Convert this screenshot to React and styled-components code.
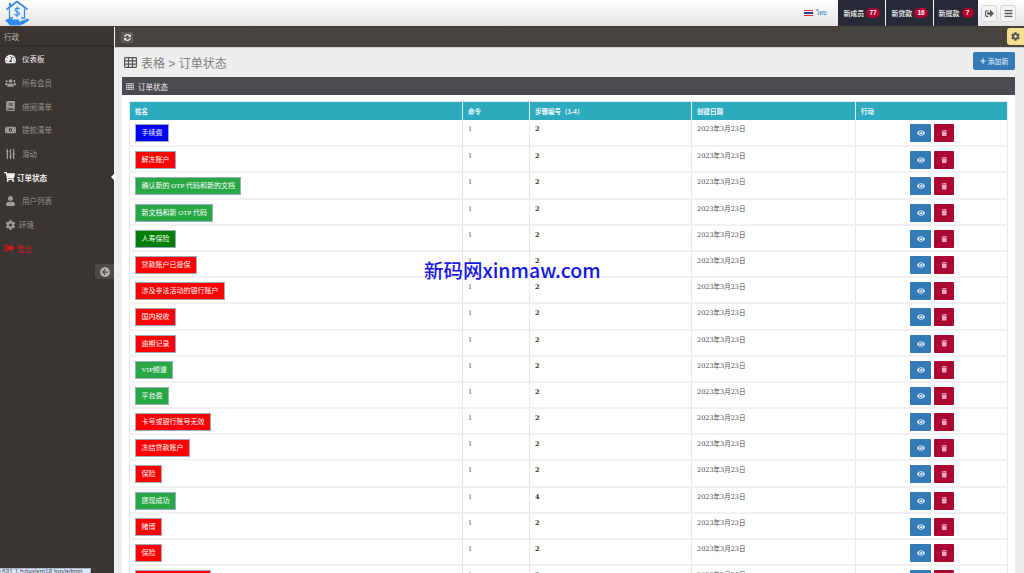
import styled, { createGlobalStyle } from "styled-components";
import {
  FaArrowCircleLeft,
  FaBars,
  FaBook,
  FaCog,
  FaEye,
  FaMoneyBillAlt,
  FaPlus,
  FaShoppingCart,
  FaSignOutAlt,
  FaSlidersH,
  FaSyncAlt,
  FaTachometerAlt,
  FaTrash,
  FaUser,
  FaUsers,
} from "react-icons/fa";

const GlobalStyle = createGlobalStyle`
  html, body {
    margin: 0;
    height: 100%;
    overflow: hidden;
    background: #eeeeee;
    font-family: "Liberation Sans", "Noto Sans CJK SC", sans-serif;
  }
`;

const Page = styled.div`
  position: relative;
  width: 1024px;
  height: 573px;
  overflow: hidden;
  display: flex;
  flex-direction: column;
`;

const TopBar = styled.header`
  flex: none;
  height: 26px;
  display: flex;
  align-items: stretch;
  background: linear-gradient(#ffffff, #e4e4e4);
  border-bottom: 1px solid #3f3b38;
`;

const Logo = styled.div`
  width: 34px;
  padding-left: 5px;
`;

const Lang = styled.div`
  margin-left: auto;
  margin-right: 10px;
  display: flex;
  align-items: center;
  gap: 3px;
  font-size: 6.5px;
  color: #337ab7;
`;

const Flag = styled.span`
  width: 9px;
  height: 6px;
  background: linear-gradient(
    #d8344a 0 18%,
    #f4f4f4 18% 34%,
    #2d3a78 34% 66%,
    #f4f4f4 66% 82%,
    #d8344a 82%
  );
`;

const Stat = styled.div`
  width: ${(p) => p.$width}px;
  margin-left: 1px;
  display: flex;
  align-items: center;
  justify-content: center;
  gap: 2px;
  background: #272a36;
  color: #dddddd;
  font-size: 7px;
  font-weight: 700;
`;

const Badge = styled.span`
  min-width: 6px;
  padding: 0 3px;
  height: 10px;
  line-height: 10px;
  text-align: center;
  border-radius: 5px;
  background: #b0002f;
  color: #fff;
  font-size: 6.5px;
`;

const TopButtons = styled.div`
  display: flex;
  align-items: center;
  gap: 3px;
  padding: 0 8px 0 3px;
`;

const TopButton = styled.div`
  box-sizing: border-box;
  width: 16px;
  height: 17px;
  display: flex;
  align-items: center;
  justify-content: center;
  border: 1px solid #d8d8d8;
  border-radius: 2px;
  background: #f4f4f4;
  color: #555;
  font-size: 9px;
`;

const Body = styled.div`
  flex: 1;
  min-height: 0;
  display: flex;
`;

const Sidebar = styled.nav`
  position: relative;
  flex: none;
  width: 114px;
  background: #3a3532;
`;

const SideTitle = styled.div`
  height: 18px;
  line-height: 22px;
  padding-left: 4px;
  font-size: 7.5px;
  color: #b8b4b0;
  border-bottom: 2px solid #322e2b;
`;

const SideList = styled.ul`
  list-style: none;
  margin: 0;
  padding: 0;
`;

const SideItem = styled.li`
  height: 23.7px;
  display: flex;
  align-items: center;
  gap: ${(p) => (p.$active || p.$logout ? "2px" : p.$short ? "3px" : "6px")};
  padding-left: ${(p) => (p.$active || p.$logout ? "4px" : "5px")};
  font-size: 7.5px;
  font-weight: ${(p) => (p.$active ? 700 : 400)};
  color: ${(p) =>
    p.$logout ? "#d81818" : p.$active || p.$bright ? "#ededed" : "#96918d"};

  svg {
    width: 11px;
    height: 10px;
    flex: none;
    color: ${(p) =>
      p.$logout ? "#d81818" : p.$active || p.$bright ? "#f0f0f0" : "#a09c98"};
  }
`;

const VerticalSliders = styled(FaSlidersH)`
  transform: rotate(90deg);
`;

const ActiveArrow = styled.span`
  position: absolute;
  right: 0;
  top: 147px;
  border: 3px solid transparent;
  border-right-color: #ffffff;
`;

const Collapse = styled.div`
  position: absolute;
  right: 0;
  top: 237px;
  width: 19px;
  height: 15px;
  display: flex;
  align-items: center;
  justify-content: center;
  border-radius: 3px 0 0 3px;
  background: #4c4946;
  color: #b9b9b9;
  font-size: 10px;
`;

const Main = styled.main`
  flex: 1;
  min-width: 0;
  display: flex;
  flex-direction: column;
  background: #eeeeee;
  border-left: 1px solid #f6f6f6;
`;

const ToolBar = styled.div`
  position: relative;
  flex: none;
  height: 20px;
  display: flex;
  align-items: center;
  padding-left: 6px;
  background: #47433f;
  border-bottom: 1px solid #cfcfcf;
`;

const Refresh = styled.div`
  width: 12px;
  height: 11px;
  display: flex;
  align-items: center;
  justify-content: center;
  border-radius: 1px;
  background: #5d5a57;
  color: #f0f0f0;
  font-size: 7px;
`;

const Settings = styled.div`
  position: absolute;
  right: 0;
  top: 1px;
  width: 17px;
  height: 17px;
  display: flex;
  align-items: center;
  justify-content: center;
  border-radius: 3px 0 0 3px;
  background: #f5df8e;
  color: #555;
  font-size: 9px;
`;

const Content = styled.div`
  flex: 1;
  min-height: 0;
  padding: 0 9px 0 7px;
`;

const Heading = styled.div`
  height: 29px;
  display: flex;
  align-items: center;
  justify-content: space-between;
`;

const Title = styled.h1`
  margin: 0 0 0 2px;
  display: flex;
  align-items: center;
  gap: 4px;
  font-size: 12px;
  font-weight: 400;
  color: #7d7d7d;

  svg {
    width: 13px;
    height: 11px;
    color: #555;
  }
`;

const AddButton = styled.div`
  height: 18px;
  width: 42px;
  margin-top: -4px;
  display: flex;
  align-items: center;
  justify-content: center;
  gap: 2px;
  border-radius: 2px;
  background: #337ab7;
  color: #eef4fa;
  font-size: 7px;

  svg {
    font-size: 6px;
  }
`;

const Panel = styled.section`
  background: #ffffff;
`;

const PanelHead = styled.div`
  height: 18px;
  display: flex;
  align-items: center;
  gap: 4px;
  padding-left: 4px;
  background: #4a4b4f;
  color: #f0f0f0;
  font-size: 7.5px;

  svg {
    width: 8px;
    height: 7px;
    color: #ddd;
  }
`;

const PanelBody = styled.div`
  padding: 6px 8px 0 7px;
`;

const Table = styled.table`
  width: 878px;
  border-collapse: collapse;
  table-layout: fixed;
`;

const Th = styled.th`
  height: 18px;
  padding: 0 0 0 5px;
  text-align: left;
  background: #2eaabf;
  color: #f2fbfd;
  font-size: 6.5px;
  font-weight: 700;
  border: 1px solid #d9eef2;
  border-width: 1px 1px 0 1px;
`;

const Td = styled.td`
  height: 26.2px;
  box-sizing: border-box;
  padding: 1px 0 0 5px;
  vertical-align: top;
  border-left: 1px solid #e8e8e8;
  border-right: 1px solid #e8e8e8;
  border-bottom: 2px solid #f1f1f1;
  font-family: "DejaVu Serif", "Noto Sans CJK SC", serif;
  font-size: 6.5px;
  color: ${(p) => (p.$strong ? "#333" : "#4a4a4a")};
  font-weight: ${(p) => (p.$strong ? 700 : 400)};
  line-height: 16px;
`;

const NameCell = styled(Td)`
  padding-top: 0;
`;

const ActionCell = styled(Td)`
  padding: 0;
`;

const Label = styled.span`
  display: block;
  width: fit-content;
  box-sizing: border-box;
  height: 18px;
  line-height: 16px;
  margin-top: 4px;
  padding: 0 5.5px;
  border: 1px solid #9aa9c4;
  background: ${(p) => p.$color};
  color: #ffffff;
  font-family: "Liberation Serif", "Noto Sans CJK SC", serif;
  font-size: 7px;
  font-weight: 400;
  white-space: nowrap;
`;

const Actions = styled.div`
  display: flex;
  justify-content: center;
  gap: 3px;
  margin-top: 4px;
  padding-left: 1px;
`;

const IconButton = styled.div`
  width: ${(p) => (p.$danger ? "20px" : "21px")};
  height: 18px;
  display: flex;
  align-items: center;
  justify-content: center;
  border-radius: 1px;
  background: ${(p) => (p.$danger ? "#ab0733" : "#337ab7")};
  color: ${(p) => (p.$danger ? "#f2a9bb" : "#dbe9f5")};
  font-size: ${(p) => (p.$danger ? "6.5px" : "8px")};
`;

const Watermark = styled.div`
  position: absolute;
  left: 424px;
  top: 256px;
  font-family: "Noto Sans CJK SC", sans-serif;
  font-size: 19.5px;
  font-weight: 500;
  line-height: 27px;
  color: #1414e6;
  white-space: nowrap;
`;

const StatusUrl = styled.div`
  position: absolute;
  left: 0;
  bottom: 0;
  height: 5px;
  line-height: 6px;
  width: 91px;
  overflow: hidden;
  padding-left: 1px;
  box-sizing: border-box;
  background: #dfe8f6;
  border: 1px solid #a9b8d2;
  border-bottom: 0;
  font-size: 6.5px;
  color: #445;
  white-space: nowrap;
`;

const BLUE = "#0000ff";
const RED = "#ff0000";
const GREEN = "#28a745";
const DARK_GREEN = "#008000";

const statuses = [
  ["手续费", BLUE, 2],
  ["解冻账户", RED, 2],
  ["确认新的 OTP 代码和新的文档", GREEN, 2],
  ["新文档和新 OTP 代码", GREEN, 2],
  ["人寿保险", DARK_GREEN, 2],
  ["贷款账户已投保", RED, 2],
  ["涉及非法活动的银行账户", RED, 2],
  ["国内税收", RED, 2],
  ["逾期记录", RED, 2],
  ["VIP频道", GREEN, 2],
  ["平台费", GREEN, 2],
  ["卡号或银行账号无效", RED, 2],
  ["冻结贷款账户", RED, 2],
  ["保险", RED, 2],
  ["提现成功", GREEN, 4],
  ["赌博", RED, 2],
  ["保险", RED, 2],
  ["银行账户信息有错误", RED, 2],
];

const menu = [
  { icon: <FaTachometerAlt />, text: "仪表板", bright: true },
  { icon: <FaUsers />, text: "所有会员" },
  { icon: <FaBook />, text: "借阅清单" },
  { icon: <FaMoneyBillAlt />, text: "提款清单" },
  { icon: <VerticalSliders />, text: "滑动" },
  { icon: <FaShoppingCart />, text: "订单状态", active: true },
  { icon: <FaUser />, text: "用户列表" },
  { icon: <FaCog />, text: "环境", short: true },
  { icon: <FaSignOutAlt />, text: "登出", logout: true },
];

function GridIcon() {
  return (
    <svg viewBox="0 0 13 11" fill="none" stroke="currentColor" strokeWidth="1.2">
      <rect x="0.6" y="0.6" width="11.8" height="9.8" rx="0.8" />
      <path d="M0.6 3.8 H12.4 M0.6 7.1 H12.4 M4.5 0.6 V10.4 M8.5 0.6 V10.4" />
    </svg>
  );
}

function LogoMark() {
  return (
    <svg width="25" height="26" viewBox="0 0 25 26" fill="none" stroke="#2f8ae8">
      <path d="M1.5 9.5 L12 1.5 L22.5 9.5" strokeWidth="1.6" strokeLinejoin="round" />
      <path d="M5 3 V6" strokeWidth="2" />
      <path d="M4.5 8.5 V18 H8 M19.5 8.5 V18 H16" strokeWidth="1.3" />
      <path
        d="M14.6 9 C13.2 7.6 9.8 8 10 10 C10.2 12 14.4 11.4 14.5 13.6 C14.6 15.6 10.8 15.8 9.4 14.2 M12.1 6.6 V17"
        strokeWidth="1.1"
      />
      <path
        d="M0 20.5 C2.5 18.4 5.5 18.4 8 19.4 L13 19.4 C14.8 19.4 14.8 21.4 13 21.4 L10 21.4 L15 21.6 L21.5 19 C24 18.2 25 19.6 23.4 20.8 C19.5 24 16.5 25.6 12.5 25.6 H5 C3.6 23.6 2 22 0 20.5 Z"
        fill="#2f8ae8"
        stroke="none"
      />
    </svg>
  );
}

function App() {
  return (
    <Page>
      <GlobalStyle />
      <TopBar>
        <Logo>
          <LogoMark />
        </Logo>
        <Lang>
          <Flag />
          ไทย
        </Lang>
        <Stat $width={47}>
          新成员<Badge>77</Badge>
        </Stat>
        <Stat $width={47}>
          新贷款<Badge>16</Badge>
        </Stat>
        <Stat $width={44}>
          新提款<Badge>7</Badge>
        </Stat>
        <TopButtons>
          <TopButton>
            <FaSignOutAlt />
          </TopButton>
          <TopButton>
            <FaBars />
          </TopButton>
        </TopButtons>
      </TopBar>
      <Body>
        <Sidebar>
          <SideTitle>行政</SideTitle>
          <SideList>
            {menu.map((m) => (
              <SideItem
                key={m.text}
                $active={m.active}
                $bright={m.bright}
                $logout={m.logout}
                $short={m.short}
              >
                {m.icon}
                {m.text}
              </SideItem>
            ))}
          </SideList>
          <ActiveArrow />
          <Collapse>
            <FaArrowCircleLeft />
          </Collapse>
        </Sidebar>
        <Main>
          <ToolBar>
            <Refresh>
              <FaSyncAlt />
            </Refresh>
            <Settings>
              <FaCog />
            </Settings>
          </ToolBar>
          <Content>
            <Heading>
              <Title>
                <GridIcon />
                表格 &gt; 订单状态
              </Title>
              <AddButton>
                <FaPlus />
                添加新
              </AddButton>
            </Heading>
            <Panel>
              <PanelHead>
                <GridIcon />
                订单状态
              </PanelHead>
              <PanelBody>
                <Table>
                  <colgroup>
                    <col style={{ width: 333 }} />
                    <col style={{ width: 67 }} />
                    <col style={{ width: 162 }} />
                    <col style={{ width: 164 }} />
                    <col style={{ width: 152 }} />
                  </colgroup>
                  <thead>
                    <tr>
                      <Th>姓名</Th>
                      <Th>命令</Th>
                      <Th>步骤编号（1-4）</Th>
                      <Th>创建日期</Th>
                      <Th>行动</Th>
                    </tr>
                  </thead>
                  <tbody>
                    {statuses.map(([name, color, step], i) => (
                      <tr key={i}>
                        <NameCell>
                          <Label $color={color}>{name}</Label>
                        </NameCell>
                        <Td>1</Td>
                        <Td $strong>{step}</Td>
                        <Td>2023年3月23日</Td>
                        <ActionCell>
                          <Actions>
                            <IconButton>
                              <FaEye />
                            </IconButton>
                            <IconButton $danger>
                              <FaTrash />
                            </IconButton>
                          </Actions>
                        </ActionCell>
                      </tr>
                    ))}
                  </tbody>
                </Table>
              </PanelBody>
            </Panel>
          </Content>
        </Main>
      </Body>
      <Watermark>新码网xinmaw.com</Watermark>
      <StatusUrl>631.1.hzjyxjxm18.top/admin</StatusUrl>
    </Page>
  );
}

export default App;
